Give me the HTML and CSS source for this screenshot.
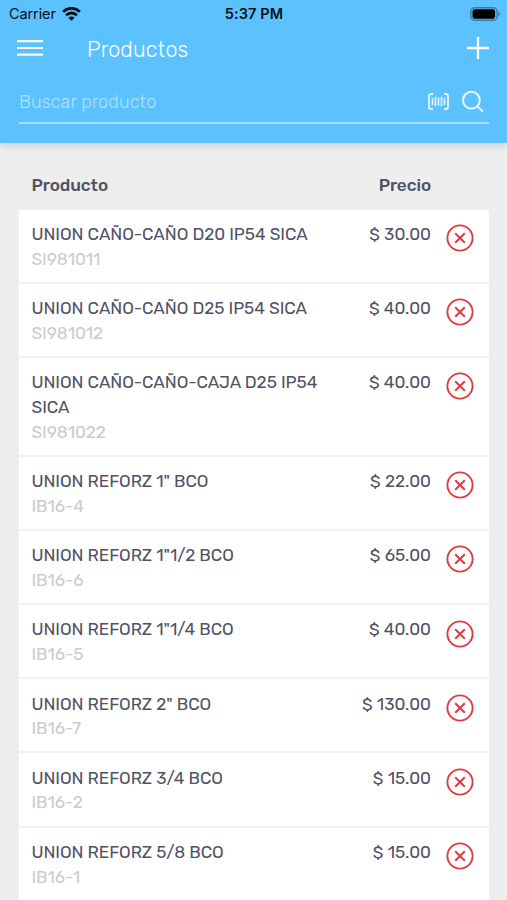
FILE: index.html
```html
<!DOCTYPE html>
<html lang="es">
<head>
<meta charset="utf-8">
<title>Productos</title>
<link rel="stylesheet" href="styles.css">
</head>
<body>
<svg class="defs" width="0" height="0" aria-hidden="true">
  <symbol id="remove" viewBox="0 0 28 28"><g fill="none" stroke="#df3b40"><circle cx="14" cy="14" r="12.6" stroke-width="1.9"/><path d="M9.2 9.2l9.6 9.6M18.8 9.2l-9.6 9.6" stroke-width="2"/></g></symbol>
</svg>
<header class="top">
  <div class="status">
    <div class="carrier"><span>Carrier</span>
      <svg width="19" height="14" viewBox="0 0 19 14"><g fill="none" stroke="#061018" stroke-width="2.8"><path d="M1.1 4.7a12 12 0 0 1 16.8 0"/><path d="M4.1 8.2a7.7 7.7 0 0 1 10.8 0"/></g><path d="M9.5 13.7L6.3 10.7a4.6 4.6 0 0 1 6.4 0z" fill="#061018"/></svg>
    </div>
    <div class="time">5:37 PM</div>
    <svg class="battery" width="31" height="14" viewBox="0 0 31 14"><rect x=".8" y=".8" width="26.4" height="12.4" rx="3.8" fill="none" stroke="#367da8" stroke-width="1.5"/><rect x="2.5" y="2.2" width="22.6" height="9.6" rx="2.2" fill="#000"/><path d="M28.5 4.8c2 .6 2 3.8 0 4.4z" fill="#367da8"/></svg>
  </div>
  <div class="bar">
    <svg width="26" height="17" viewBox="0 0 26 17"><path d="M0 1.2h26M0 8h26M0 14.7h26" stroke="#fff" stroke-width="2.2"/></svg>
    <h1>Productos</h1>
    <svg width="22" height="22" viewBox="0 0 22 22"><path d="M11 0v22M0 11h22" stroke="#fff" stroke-width="2.3"/></svg>
  </div>
  <div class="search">
    <span class="hint">Buscar producto</span>
    <svg class="barcode" width="21" height="17" viewBox="0 0 21 17"><g fill="none" stroke="#e6f6ff"><path d="M5 1H3Q1 1 1 3v11q0 2 2 2h2M16 1h2q2 0 2 2v11q0 2-2 2h-2" stroke-width="1.8"/><path d="M4.5 5v7M7.5 3.7v9.6M10.5 4.5v8M13.5 3.7v9.6M16.5 5v7" stroke-width="1.6"/></g></svg>
    <svg width="22" height="22" viewBox="0 0 22 22"><g fill="none" stroke="#edf9ff" stroke-width="1.9"><circle cx="9.4" cy="9.2" r="8.4"/><path d="M15.3 15.1l5.6 5.6"/></g></svg>
  </div>
</header>
<main>
  <div class="head"><span>Producto</span><span>Precio</span></div>
  <ul>
    <li><div class="info"><p class="name">UNION CAÑO-CAÑO D20 IP54 SICA</p><p class="code">SI981011</p></div><span class="price">$ 30.00</span><svg class="x"><use href="#remove"/></svg></li>
    <li><div class="info"><p class="name">UNION CAÑO-CAÑO D25 IP54 SICA</p><p class="code">SI981012</p></div><span class="price">$ 40.00</span><svg class="x"><use href="#remove"/></svg></li>
    <li><div class="info"><p class="name">UNION CAÑO-CAÑO-CAJA D25 IP54<br>SICA</p><p class="code">SI981022</p></div><span class="price">$ 40.00</span><svg class="x"><use href="#remove"/></svg></li>
    <li><div class="info"><p class="name">UNION REFORZ 1" BCO</p><p class="code">IB16-4</p></div><span class="price">$ 22.00</span><svg class="x"><use href="#remove"/></svg></li>
    <li><div class="info"><p class="name">UNION REFORZ 1"1/2 BCO</p><p class="code">IB16-6</p></div><span class="price">$ 65.00</span><svg class="x"><use href="#remove"/></svg></li>
    <li><div class="info"><p class="name">UNION REFORZ 1"1/4 BCO</p><p class="code">IB16-5</p></div><span class="price">$ 40.00</span><svg class="x"><use href="#remove"/></svg></li>
    <li><div class="info"><p class="name">UNION REFORZ 2" BCO</p><p class="code">IB16-7</p></div><span class="price">$ 130.00</span><svg class="x"><use href="#remove"/></svg></li>
    <li><div class="info"><p class="name">UNION REFORZ 3/4 BCO</p><p class="code">IB16-2</p></div><span class="price">$ 15.00</span><svg class="x"><use href="#remove"/></svg></li>
    <li><div class="info"><p class="name">UNION REFORZ 5/8 BCO</p><p class="code">IB16-1</p></div><span class="price">$ 15.00</span><svg class="x"><use href="#remove"/></svg></li>
  </ul>
</main>
</body>
</html>
```
FILE: styles.css
```css
* { box-sizing: border-box; margin: 0; padding: 0; }
body { height: 900px; overflow: hidden; background: #eeeeee; color: #505263; font-family: Rubik, Roboto, sans-serif; font-size: 17.2px; }
svg { display: block; flex: none; }
.defs { position: absolute; }
.top { height: 142.5px; background: #5bc1ff; box-shadow: 0 2px 8px rgba(0, 0, 0, .16); color: #fff; }
.status { display: grid; grid-template-columns: 1fr auto 1fr; align-items: center; height: 27px; padding: 0 6px 0 9px; color: #061018; font-family: Inter, sans-serif; font-size: 14.5px; }
.carrier { display: flex; align-items: center; gap: 6px; letter-spacing: -.1px; }
.time { margin-left: -2px; font-weight: 600; letter-spacing: .1px; }
.battery { justify-self: end; }
.bar { display: flex; align-items: center; height: 42px; padding: 0 18.5px 0 17px; }
h1 { flex: 1; padding: 3px 0 0 44px; font-size: 21.5px; font-weight: 300; letter-spacing: .2px; }
.search { display: flex; align-items: center; height: 55px; margin: 0 18px 0 19px; padding: 12px 5px 0 0; border-bottom: 2px solid #a5deff; }
.hint { flex: 1; color: #b0e2ff; font-size: 18.2px; font-weight: 300; letter-spacing: .1px; }
.barcode { margin-right: 13px; }
main { padding: 0 18.5px 0 19px; }
.head { display: flex; justify-content: space-between; height: 67.2px; padding: 30.9px 57.5px 0 12.5px; font-weight: 500; line-height: 24.7px; letter-spacing: -.08px; }
ul { list-style: none; }
li { display: flex; padding: 12.4px 14.5px 10.35px 12.5px; background: #fff; border-bottom: 2px solid #f1f2f2; line-height: 24.7px; }
.info { flex: 1; }
.name { letter-spacing: -.06px; white-space: nowrap; }
.code { color: #cbcbcb; letter-spacing: -.08px; }
.price { margin-right: 15px; }
.x { width: 28px; height: 28px; margin-top: 2.1px; }
```
